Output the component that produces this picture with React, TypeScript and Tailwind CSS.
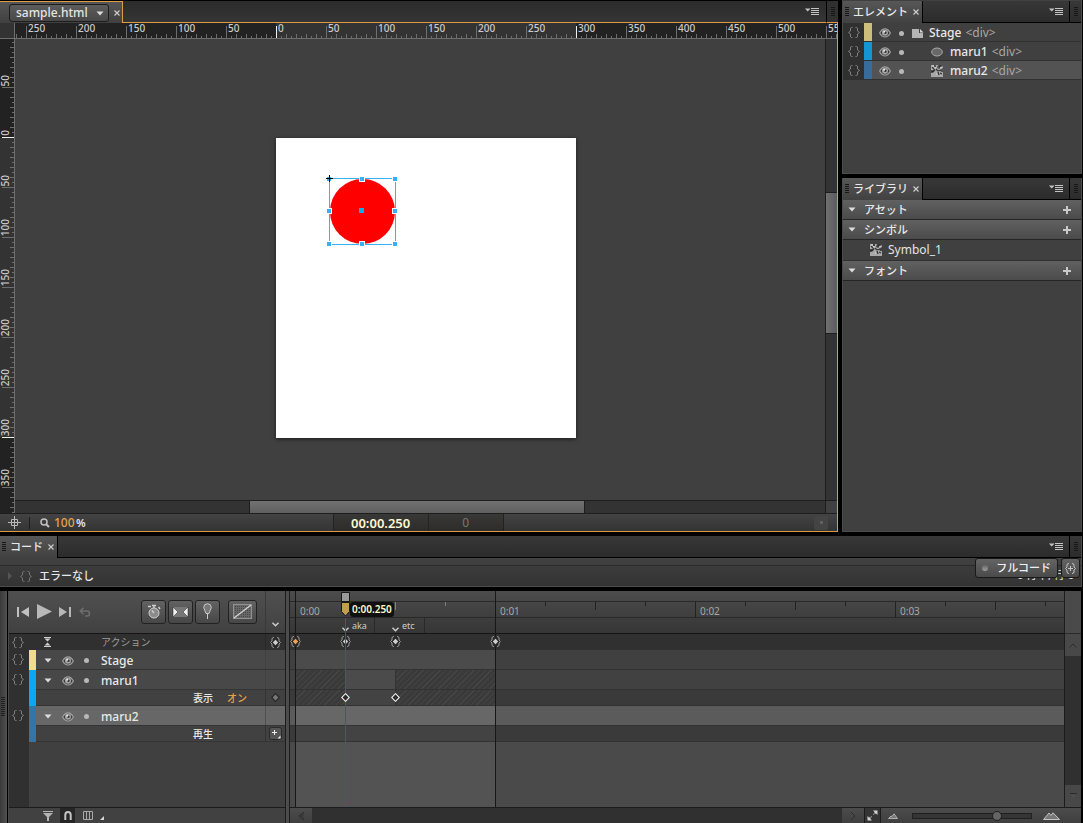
import React from 'react';
import { clsx } from 'clsx';

const rulerLabelsX = ['250', '200', '150', '100', '50', '0', '50', '100', '150', '200', '250', '300', '350', '400', '450', '500', '550'];
const rulerLabelsY = ['50', '0', '50', '100', '150', '200', '250', '300', '350', '400'];

const BraceIcon = ({ className = 'text-[#808080]' }: { className?: string }) => (
  <svg width="12" height="11" viewBox="0 0 12 11" fill="none" stroke="currentColor" className={className}>
    <path d="M4.5 .5H3.5Q2.5 .5 2.5 2V4L.5 5.5L2.5 7V9Q2.5 10.5 3.5 10.5H4.5M7.5 .5H8.5Q9.5 .5 9.5 2V4L11.5 5.5L9.5 7V9Q9.5 10.5 8.5 10.5H7.5" />
  </svg>
);

const EyeIcon = () => (
  <svg width="12" height="10" viewBox="0 0 12 10">
    <path d="M.6 5Q3 .9 6 .9T11.4 5Q9 9 6 9T.6 5Z" fill="#3a3a3a" stroke="#a0a0a0" strokeWidth="1.2" />
    <circle cx="6" cy="4.8" r="3" fill="#a8a8a8" />
    <circle cx="6.4" cy="4.8" r="1.3" fill="#333" />
    <circle cx="5.2" cy="3.8" r="1" fill="#e8e8e8" />
  </svg>
);

const Dot = () => <span className="block size-[5px] rounded-full bg-[#b8b8b8]" />;

const DownTriangle = ({ className = 'text-[#dddddd]' }: { className?: string }) => (
  <svg width="8" height="5" viewBox="0 0 8 5" className={className}>
    <path d="M.5 .5H7.5L4 4.5Z" fill="currentColor" />
  </svg>
);

const CloseIcon = () => (
  <svg width="6" height="6" viewBox="0 0 6 6" stroke="#d0d0d0" strokeWidth="1.1">
    <path d="M.5 .5L5.5 5.5M5.5 .5L.5 5.5" />
  </svg>
);

const MenuIcon = () => (
  <svg width="15" height="9" viewBox="0 0 15 9">
    <path d="M0 1.5H5.5L2.7 4.5Z" fill="#c4c4c4" />
    <path d="M6 1.5H14M6 3.5H14M6 5.5H14M6 7.5H14" stroke="#c4c4c4" strokeWidth="1" />
  </svg>
);

const Grip = () => (
  <svg width="4" height="10" viewBox="0 0 4 10" stroke="#171717">
    <path d="M0 .5H4M0 2.5H4M0 4.5H4M0 6.5H4M0 8.5H4" />
  </svg>
);

const SymbolIcon = () => (
  <svg width="12" height="12" viewBox="0 0 12 12">
    <path d="M0 0H3V2H5V0H7L6 3L8 4L12 1V3L9 5L10 7H12V12H0V8L3 7V5L0 5Z" fill="#a9a9a9" />
    <path d="M1 2L4 5M4 5L2 7H0M5 4L7 6M7 6L10 5M7 7L8 10M8 2L10 0M9 8L11 9" stroke="#333" strokeWidth="1.2" />
    <path d="M1 1H3M9 3L11 2M5 9H6M3 3L5 3" stroke="#d8d8d8" />
  </svg>
);

const PageIcon = () => (
  <svg width="12" height="9" viewBox="0 0 12 9">
    <path d="M0 0H7V4H11V9H0Z" fill="#b5b5b5" />
    <path d="M8 0L11.5 3.5H8Z" fill="#d8d8d8" />
  </svg>
);

const EllipseIcon = () => (
  <svg width="12" height="10" viewBox="0 0 12 10">
    <ellipse cx="6" cy="5" rx="5.3" ry="4" fill="#686868" stroke="#a8a8a8" />
  </svg>
);

const PlusIcon = () => (
  <svg width="8" height="8" viewBox="0 0 8 8" stroke="#c9c9c9" strokeWidth="2">
    <path d="M4 0V8M0 4H8" />
  </svg>
);

const BraceKey = ({ color = '#d0d0d0' }: { color?: string }) => (
  <svg width="11" height="11" viewBox="0 0 11 11" fill="none">
    <path d="M4 .5Q2 .5 2 2V4L.5 5.5L2 7V9Q2 10.5 4 10.5H7Q9 10.5 9 9V7L10.5 5.5L9 4V2Q9 .5 7 .5Z" fill="#2a2a2a" />
    <path d="M4 .5Q2 .5 2 2V4L.5 5.5L2 7V9Q2 10.5 4 10.5M7 .5Q9 .5 9 2V4L10.5 5.5L9 7V9Q9 10.5 7 10.5" stroke="#9a9a9a" />
    <path d="M5.5 2.8L8.2 5.5L5.5 8.2L2.8 5.5Z" fill={color} />
  </svg>
);

const Diamond = ({ filled = false }: { filled?: boolean }) => (
  <svg width="9" height="9" viewBox="0 0 9 9">
    <path d="M4.5 .7L8.3 4.5L4.5 8.3L.7 4.5Z" fill={filled ? '#777777' : '#2a2a2a'} stroke={filled ? '#242424' : '#eeeeee'} strokeWidth="1.1" />
  </svg>
);

const Chevron = () => (
  <svg width="7" height="5" viewBox="0 0 7 5" fill="none">
    <path d="M.5 .7L3.5 3.7L6.5 .7" stroke="#d0d0d0" strokeWidth="1.4" />
  </svg>
);

const PanelHeader = ({ title }: { title: string }) => (
  <div className="flex h-[22px] shrink-0 bg-gradient-to-b from-[#383838] to-[#2b2b2b]">
    <div className="flex items-center gap-1 border-r border-black bg-gradient-to-b from-[#575757] to-[#414141] pl-[2px] pr-[3px]">
      <Grip />
      <span className="mr-px text-[11px] font-medium text-[#e8e8e8]">{title}</span>
      <button type="button" aria-label={`${title}を閉じる`}><CloseIcon /></button>
    </div>
    <div className="flex flex-1 items-center justify-end border-b border-black pr-[5px]">
      <button type="button" aria-label="パネルメニュー"><MenuIcon /></button>
    </div>
    <div className="flex w-3 items-center justify-center border-b border-l border-black">
      <Grip />
    </div>
  </div>
);

const HorizontalRuler = () => (
  <div className="flex h-4 min-w-0 flex-1 overflow-hidden border-b border-[#6e6e6e] bg-[#222222]">
    <svg width="11" height="15" className="shrink-0" stroke="#6e6e6e">
      <path d="M1.5 11V15M6.5 13V15" />
    </svg>
    {rulerLabelsX.map((label, i) => (
      <div key={i} className={clsx('relative h-full w-[50px] shrink-0', i >= 5 && i < 11 && 'bg-[#333333]')}>
        <svg width="50" height="15" className="absolute inset-0" stroke="#6e6e6e">
          <path d="M.5 3V15" stroke={i === 5 || i === 11 ? '#eeeeee' : '#6e6e6e'} />
          <path d="M5.5 13V15M10.5 11V15M15.5 13V15M20.5 11V15M25.5 13V15M30.5 11V15M35.5 13V15M40.5 11V15M45.5 13V15" />
        </svg>
        <span className="relative block pl-[2px] text-[10px] leading-[11px] font-medium text-[#cccccc]">{label}</span>
      </div>
    ))}
  </div>
);

const VerticalRuler = () => (
  <div className="flex w-[15px] shrink-0 flex-col overflow-hidden border-r border-[#6e6e6e] bg-[#222222]">
    {rulerLabelsY.map((label, i) => (
      <div
        key={i}
        className={clsx(
          'relative flex w-full shrink-0 flex-col items-start justify-end pb-[2px]',
          i === 0 ? 'h-[49px]' : 'h-[50px]',
          i >= 2 && i < 8 && 'bg-[#333333]'
        )}
      >
        <svg width="14" height="50" className="absolute bottom-0 left-0" stroke="#6e6e6e">
          <path d="M2 49.5H14" stroke={i === 1 || i === 7 ? '#eeeeee' : '#6e6e6e'} />
          <path d="M12 4.5H14M10 9.5H14M12 14.5H14M10 19.5H14M12 24.5H14M10 29.5H14M12 34.5H14M10 39.5H14M12 44.5H14" />
        </svg>
        <span className="relative rotate-180 text-[10px] leading-[10px] font-medium text-[#cccccc] [writing-mode:vertical-rl]">{label}</span>
      </div>
    ))}
  </div>
);

const handles = [
  'left-[-3px] top-[-2px]', 'left-[30px] top-[-2px]', 'left-[63px] top-[-2px]',
  'left-[-3px] top-[30px]', 'left-[63px] top-[30px]',
  'left-[-3px] top-[63px]', 'left-[30px] top-[63px]', 'left-[63px] top-[63px]',
];

const Canvas = () => (
  <div className="relative min-w-0 flex-1 overflow-hidden bg-[#404040]">
    <div className="absolute left-[261px] top-[99px] size-[300px] bg-white shadow-[0_1px_4px_rgba(0,0,0,0.6)]">
      <div className="absolute left-[53px] top-[40px] size-[67px] border border-[#35b1f5]">
        <div className="size-[65px] rounded-full bg-[#ff0000]" />
        {handles.map((place) => (
          <span key={place} className={clsx('absolute size-[4px] bg-[#35b1f5] outline outline-white', place)} />
        ))}
        <span className="absolute left-[29px] top-[29px] size-[5px] bg-[#00b0f5]" />
        <svg width="7" height="7" className="absolute left-[-4px] top-[-4px]" stroke="#000">
          <path d="M3.5 0V7M0 3.5H7" />
        </svg>
      </div>
    </div>
  </div>
);

const DocumentPanel = () => (
  <section className="flex min-w-0 flex-1 flex-col border-b border-[#e09a45] bg-[#3b3b3b]">
    <div className="flex h-[22px] shrink-0">
      <div className="flex items-center gap-[5px] border-r border-t border-[#e09a45] bg-gradient-to-b from-[#555555] to-[#404040] pl-[9px] pr-[2px]">
        <div className="relative">
          <select aria-label="ドキュメント" className="block h-[18px] w-[100px] appearance-none rounded-[3px] border border-[#1d1d1d] bg-gradient-to-b from-[#5c5c5c] to-[#484848] pl-[6px] text-xs leading-4 font-medium text-[#e4e4e4]">
            <option>sample.html</option>
          </select>
          <DownTriangle className="pointer-events-none absolute right-[5px] top-[7px] text-[#dddddd]" />
        </div>
        <button type="button" aria-label="閉じる"><CloseIcon /></button>
      </div>
      <div className="flex flex-1 items-center justify-end border-b border-[#e09a45] bg-gradient-to-b from-[#2b2b2b] to-[#353535] pr-[6px]">
        <button type="button" aria-label="メニュー"><MenuIcon /></button>
      </div>
      <div className="flex w-3 items-center justify-center border-b border-l border-b-[#e09a45] border-l-black bg-[#303030]"><Grip /></div>
    </div>
    <div className="flex min-h-0 flex-1 flex-col border-r border-[#e09a45]">
      <div className="flex shrink-0">
        <div className="w-[15px] border-b border-r border-[#6e6e6e] bg-[#333333]" />
        <HorizontalRuler />
      </div>
      <div className="flex min-h-0 flex-1">
        <VerticalRuler />
        <div className="flex min-w-0 flex-1 flex-col">
          <div className="flex min-h-0 flex-1">
            <Canvas />
            <div className="w-3 border-l border-[#1e1e1e] bg-[#333333] pt-[153px]">
              <div className="h-[142px] border-y border-[#1e1e1e] bg-gradient-to-r from-[#707070] to-[#5c5c5c]" />
            </div>
          </div>
          <div className="flex h-[13px] shrink-0">
            <div className="flex-1 border-t border-[#1e1e1e] bg-[#333333] pl-[234px]">
              <div className="h-full w-[336px] border-x border-[#1e1e1e] bg-gradient-to-b from-[#727272] to-[#5f5f5f]" />
            </div>
            <div className="w-3 border-l border-t border-[#1e1e1e] bg-[#404040]" />
          </div>
        </div>
      </div>
      <div className="flex h-[18px] shrink-0 items-center border-t border-[#1e1e1e] bg-gradient-to-b from-[#434343] to-[#343434]">
        <button type="button" aria-label="中央に配置" className="ml-2">
          <svg width="13" height="13" viewBox="0 0 13 13" stroke="#b9b9b9" fill="none">
            <path d="M6.5 0V13M0 6.5H13M3.5 3.5H9.5V9.5H3.5Z" />
          </svg>
        </button>
        <span className="ml-2 h-3 w-px bg-[#1c1c1c]" />
        <svg width="10" height="10" viewBox="0 0 10 10" fill="none" stroke="#c0c0c0" className="ml-[10px]">
          <circle cx="4" cy="4" r="3" strokeWidth="1.5" />
          <path d="M6.2 6.2L9 9" strokeWidth="2" />
        </svg>
        <button type="button" className="ml-1 w-[22px] text-left text-xs leading-4 font-medium text-[#e8a04a]">100</button>
        <span className="text-[11px] leading-4 font-semibold text-[#e8e8e8]">%</span>
        <div className="ml-[247px] flex h-full border-x border-[#222222] bg-gradient-to-b from-[#383838] to-[#2d2c29]">
          <button type="button" className="w-[95px] border-r border-[#222222] text-[13px] leading-4 font-semibold text-[#fdf8cf]">00:00.250</button>
          <button type="button" className="w-[74px] text-xs leading-4 text-[#777777]">0</button>
        </div>
        <span className="mr-[9px] ml-auto flex size-[14px] items-center justify-center rounded-[2px] bg-[#444444]">
          <span className="size-[3px] bg-[#606060]" />
        </span>
      </div>
    </div>
  </section>
);

const elements = [
  { name: 'Stage', swatch: 'bg-[#cdbf7b]', icon: PageIcon, nested: false, selected: false },
  { name: 'maru1', swatch: 'bg-[#1495d4]', icon: EllipseIcon, nested: true, selected: false },
  { name: 'maru2', swatch: 'bg-[#386d9b]', icon: SymbolIcon, nested: true, selected: true },
];

const ElementsPanel = () => (
  <section className="flex h-[174px] shrink-0 flex-col border-x border-b border-[#4c4c4c] bg-[#404040] pt-px">
    <PanelHeader title="エレメント" />
    <ul>
      {elements.map((item) => (
        <li key={item.name} className={clsx('flex h-[19px] border-b border-[#303030]', item.selected ? 'bg-[#535353]' : 'bg-[#404040]')}>
          <button type="button" aria-label="アクションを開く" className="flex h-full w-[21px] items-center justify-center bg-[#303030]"><BraceIcon /></button>
          <span className={clsx('h-full w-2', item.swatch)} />
          <div className="flex items-center pl-[7px] pt-0.5">
            <button type="button" aria-label="表示"><EyeIcon /></button>
            <span className="ml-2"><Dot /></span>
            <span className={clsx('flex w-3 justify-center', item.nested ? 'ml-[27px]' : 'ml-2')}><item.icon /></span>
            <span className={clsx('text-xs leading-4 font-medium text-[#e8e8e8]', item.nested ? 'ml-[7px]' : 'ml-[5px]')}>{item.name}</span>
            <span className="ml-1 text-xs leading-4 text-[#a8a8a8]">&lt;div&gt;</span>
          </div>
        </li>
      ))}
    </ul>
  </section>
);

const LibrarySection = ({ title, children }: { title: string; children?: React.ReactNode }) => (
  <>
    <div className="flex h-5 items-center border-b border-[#252525] bg-gradient-to-b from-[#616161] to-[#4b4b4b] pl-[5px] pr-[10px]">
      <button type="button" className="flex flex-1 items-center gap-2 text-left text-[11px] leading-4 font-medium text-[#e8e8e8]">
        <DownTriangle />
        {title}
      </button>
      <button type="button" aria-label={`${title}を追加`}><PlusIcon /></button>
    </div>
    {children}
  </>
);

const LibraryPanel = () => (
  <section className="mt-1 flex min-h-0 flex-1 flex-col border-x border-b border-[#4c4c4c] bg-[#404040]">
    <PanelHeader title="ライブラリ" />
    <LibrarySection title="アセット" />
    <LibrarySection title="シンボル">
      <div className="flex h-[21px] items-center gap-[6px] border-b border-[#303030] pl-[27px] text-xs leading-4 text-[#e4e4e4]">
        <SymbolIcon />
        Symbol_1
      </div>
    </LibrarySection>
    <LibrarySection title="フォント" />
  </section>
);

const CodePanel = () => (
  <section className="relative mt-1 shrink-0 border-r border-[#4c4c4c]">
    <PanelHeader title="コード" />
    <div className="h-2 border-b border-[#2a2a2a] bg-[#404040]" />
    <div className="flex h-[21px] items-center border-b border-[#4c4c4c] bg-gradient-to-b from-[#3c3c3c] to-[#333333] pl-2 pr-[7px] text-[#e8e8e8]">
      <svg width="4" height="8"><path d="M0 0L4 4L0 8Z" fill="#555555" /></svg>
      <BraceIcon className="ml-2 text-[#757575]" />
      <span className="ml-[7px] text-[11px] leading-4 font-medium">エラーなし</span>
      <span className="ml-auto self-end text-[11px] leading-[22px]">0 行中, 行 0</span>
    </div>
    <div className="absolute right-[1px] top-[22px] flex gap-[3px]">
      <button type="button" className="flex h-5 items-center gap-2 rounded-[3px] border border-[#191919] bg-gradient-to-b from-[#646464] to-[#4a4a4a] px-[6px] text-[11px] leading-4 font-medium text-[#eeeeee]">
        <span className="size-[6px] rounded-full bg-gradient-to-b from-[#666666] to-[#a0a0a0]" />
        フルコード
      </button>
      <button type="button" aria-label="アクションを挿入" className="flex h-5 w-[19px] items-center justify-center rounded-[3px] border border-[#191919] bg-gradient-to-b from-[#646464] to-[#4a4a4a]">
        <svg width="11" height="11" viewBox="0 0 11 11" fill="none" stroke="#c4c4c4">
          <path d="M4 .5Q2 .5 2 2V4L.5 5.5L2 7V9Q2 10.5 4 10.5M7 .5Q9 .5 9 2V4L10.5 5.5L9 7V9Q9 10.5 7 10.5M5.5 3V8M3 5.5H8" />
        </svg>
      </button>
    </div>
  </section>
);

const ToolButton = ({ label, wide, children }: { label: string; wide?: boolean; children: React.ReactNode }) => (
  <button
    type="button"
    aria-label={label}
    className={clsx('flex h-6 items-center justify-center rounded-[3px] border border-[#222222] bg-gradient-to-b from-[#626262] to-[#474747]', wide ? 'ml-[6px] w-[29px]' : 'w-[25px]')}
  >
    {children}
  </button>
);

const TransportBar = () => (
  <div className="flex h-[43px] border-b border-[#151515] bg-gradient-to-b from-[#505050] to-[#414141]">
    <div className="flex flex-1 items-center justify-between border-r border-[#3a3a3a] pb-px pl-2 pr-2">
      <div className="flex items-center gap-[7px]">
        <button type="button" aria-label="先頭へ">
          <svg width="13" height="10" fill="#c0c0c0"><path d="M0 0H2V10H0ZM12 0V10L4 5Z" /></svg>
        </button>
        <button type="button" aria-label="再生">
          <svg width="15" height="15" fill="#b8b8b8"><path d="M0 0L15 7.5L0 15Z" /></svg>
        </button>
        <button type="button" aria-label="末尾へ">
          <svg width="13" height="10" fill="#b8b8b8"><path d="M10 0H12V10H10ZM0 0V10L8 5Z" /></svg>
        </button>
        <button type="button" aria-label="戻る">
          <svg width="12" height="10" fill="none" stroke="#6e6e6e" strokeWidth="1.6">
            <path d="M1.5 4H8Q10.5 4 10.5 6.5T8 9H6M4.5 .8L1.3 4L4.5 7.2" />
          </svg>
        </button>
      </div>
      <div className="flex gap-[2px]">
        <ToolButton label="自動キーフレーム">
          <svg width="14" height="17" viewBox="0 0 14 17">
            <circle cx="7" cy="10" r="5" fill="#8b8b8b" stroke="#d0d0d0" />
            <path d="M5 2.5H9M7 2V5M1 3.5H4M11.5 4L13 6M7 10L5 7.5" stroke="#d0d0d0" strokeWidth="1.4" />
          </svg>
        </ToolButton>
        <ToolButton label="自動トランジション">
          <svg width="17" height="10" viewBox="0 0 17 10">
            <rect x="1" y="0" width="15" height="10" fill="#777777" />
            <path d="M1 0L6 5L1 10ZM16 0L11 5L16 10Z" fill="#f0f0f0" stroke="#222" strokeWidth=".5" />
          </svg>
        </ToolButton>
        <ToolButton label="ピン">
          <svg width="9" height="17" viewBox="0 0 9 17">
            <path d="M4.5 10V16" stroke="#cccccc" />
            <path d="M4.5 .7Q8.3 .9 8.3 4.5L6 10.5H3L.7 4.5Q.7 .9 4.5 .7Z" fill="#777777" stroke="#c8c8c8" />
          </svg>
        </ToolButton>
        <ToolButton label="イージング" wide>
          <svg width="19" height="15" viewBox="0 0 19 15">
            <rect x=".5" y=".5" width="18" height="14" fill="#686868" stroke="#929292" />
            <path d="M2 2.5H17M2 4.5H17M2 6.5H17M2 8.5H17M2 10.5H17M2 12.5H17" stroke="#484848" strokeDasharray="1 1" />
            <path d="M1 14L18 1" stroke="#d4d4d4" strokeWidth="1.3" />
          </svg>
        </ToolButton>
      </div>
    </div>
    <div className="flex w-[19px] items-end justify-center pb-[6px]"><Chevron /></div>
  </div>
);

type Layer = {
  name: string;
  swatch: string;
  selected?: boolean;
  property?: { label: string; value?: string; key: 'diamond' | 'add' };
};

const layers: Layer[] = [
  { name: 'Stage', swatch: 'bg-[#efdd8b]' },
  { name: 'maru1', swatch: 'bg-[#0aa7f5]', property: { label: '表示', value: 'オン', key: 'diamond' } },
  { name: 'maru2', swatch: 'bg-[#3374a9]', selected: true, property: { label: '再生', key: 'add' } },
];

const LayerGroup = ({ layer }: { layer: Layer }) => (
  <div className="flex">
    <div className="flex w-5 shrink-0 bg-[#303030] pl-[3px] pt-1">
      <button type="button" aria-label="アクションを開く" className="h-[11px]"><BraceIcon /></button>
    </div>
    <div className={clsx('w-[7px] shrink-0', layer.swatch)} />
    <div className="min-w-0 flex-1">
      <div className={clsx('flex h-5 border-b border-[#343434]', layer.selected ? 'bg-[#676767]' : 'bg-[#484848]')}>
        <div className="flex flex-1 items-center border-r border-[#3a3a3a]/50 pl-2 pt-0.5">
          <button type="button" aria-label="展開"><DownTriangle /></button>
          <button type="button" aria-label="表示" className="ml-[10px]"><EyeIcon /></button>
          <span className="ml-[10px]"><Dot /></span>
          <span className="ml-3 text-xs leading-4 font-medium text-[#e8e8e8]">{layer.name}</span>
        </div>
        <div className="w-[19px]" />
      </div>
      {layer.property && (
        <div className="flex h-4 border-b border-[#343434] bg-[#414141]">
          <div className="flex flex-1 items-center border-r border-[#333333] pl-[157px] text-[10px] leading-4">
            <span className="w-[34px] font-medium text-[#e8e8e8]">{layer.property.label}</span>
            {layer.property.value && <button type="button" className="font-medium text-[#e8a04a]">{layer.property.value}</button>}
          </div>
          <button type="button" aria-label="キーフレーム" className="flex w-[19px] items-center justify-center">
            {layer.property.key === 'diamond' ? (
              <Diamond filled />
            ) : (
              <svg width="13" height="13" viewBox="0 0 13 13">
                <rect x=".5" y=".5" width="12" height="12" rx="2" fill="#555555" stroke="#292929" />
                <path d="M5.5 3V8M3 5.5H8" stroke="#eeeeee" />
                <path d="M11.5 8.5V11.5H8.5Z" fill="#eeeeee" />
              </svg>
            )}
          </button>
        </div>
      )}
    </div>
  </div>
);

const LayerPanel = () => (
  <div className="flex w-[277px] shrink-0 flex-col border-r border-[#1c1c1c] bg-[#404040]">
    <TransportBar />
    <div className="flex h-4 items-center bg-[#303030] text-[10px] leading-4 text-[#9c9c9c]">
      <span className="w-5 pl-[3px]"><BraceIcon /></span>
      <button type="button" aria-label="すべて折りたたむ" className="ml-[15px]">
        <svg width="7" height="10" viewBox="0 0 7 10" fill="#d0d0d0"><path d="M0 0H7V1H0ZM.5 1.5H6.5L3.5 4.5ZM3.5 5.5L6.5 8.5H.5ZM0 9H7V10H0Z" /></svg>
      </button>
      <span className="ml-[50px] flex-1">アクション</span>
      <span className="flex h-full w-5 items-center justify-center border-l border-[#282828]"><BraceKey /></span>
    </div>
    {layers.map((layer) => <LayerGroup key={layer.name} layer={layer} />)}
    <div className="w-5 flex-1 bg-[#303030]" />
    <div className="flex h-4 shrink-0 items-center border-t border-[#1c1c1c] bg-[#414141] pl-[34px]">
      <button type="button" aria-label="フィルター">
        <svg width="10" height="10" viewBox="0 0 10 10" fill="#b4b4b4"><path d="M0 0H10V1H0ZM0 2H10L6 6V10H4V6Z" /></svg>
      </button>
      <button type="button" aria-label="スナップ" className="ml-[7px] flex h-full w-[15px] items-center justify-center bg-[#262626]">
        <svg width="8" height="9" viewBox="0 0 8 9" fill="none" stroke="#c4c4c4" strokeWidth="2"><path d="M1.3 9V4Q1.3 1 4 1T6.7 4V9" /></svg>
      </button>
      <button type="button" aria-label="グリッド" className="ml-2 flex items-end gap-[7px]">
        <svg width="10" height="9" viewBox="0 0 10 9" fill="none" stroke="#a8a8a8"><path d="M.5 .5H9.5V8.5H.5ZM3.5 0V9M6.5 0V9" /></svg>
        <svg width="4" height="4" fill="#d8d8d8"><path d="M4 0V4H0Z" /></svg>
      </button>
    </div>
  </div>
);

const seconds = ['0:00', '0:01', '0:02', '0:03'];
const labels = [
  { name: 'aka', place: 'left-[50px]' },
  { name: 'etc', place: 'left-[100px]' },
];

const TimeRuler = () => (
  <div className="h-[43px] shrink-0 border-b border-[#151515] bg-gradient-to-b from-[#4c4c4c] to-[#363636]">
    <div className="h-[11px] border-b border-[#292929]" />
    <div className="flex h-4 overflow-hidden border-b border-[#292929] pl-[5px]">
      {seconds.map((time) => (
        <div key={time} className="relative w-[200px] shrink-0">
          <svg width="200" height="15" className="absolute inset-0" stroke="#222222">
            <path d="M.5 0V15M50.5 0V4M100.5 0V8M150.5 0V4" />
            {time === '0:00' && <path d="M100.5 0V8M150.5 0V4" stroke="#808080" />}
          </svg>
          <span className="relative block pl-[5px] text-[10px] leading-[18px] text-[#a6a6a6]">{time}</span>
        </div>
      ))}
    </div>
    <div className="relative ml-[5px] h-[15px]">
      {labels.map((label) => (
        <div key={label.name} className={clsx('absolute top-0 h-full w-[30px] border-r border-[#292929] pl-[7px] text-[9px] leading-[15px] text-[#cccccc]', label.place)}>
          {label.name}
          <span className="absolute bottom-[1px] left-[-3px]"><Chevron /></span>
        </div>
      ))}
    </div>
  </div>
);

const trackRows = [
  { height: 'h-5', base: 'bg-[#404040]', active: 'bg-[#4b4b4b]', off: false, keys: false },
  { height: 'h-5', base: 'bg-[#414141]', active: 'bg-[#4b4b4b]', off: true, keys: false },
  { height: 'h-4', base: 'bg-[#3a3a3a]', active: 'bg-[#434343]', off: true, keys: true },
  { height: 'h-5', base: 'bg-[#5b5b5b]', active: 'bg-[#676767]', off: false, keys: false },
  { height: 'h-4', base: 'bg-[#3a3a3a]', active: 'bg-[#434343]', off: false, keys: false },
];

const hatch = 'bg-[repeating-linear-gradient(135deg,#3a3a3a_0,#3a3a3a_3px,#454545_3px,#454545_4px)]';
const actionKeys = ['left-0', 'left-[50px]', 'left-[100px]', 'left-[200px]'];

const Tracks = () => (
  <div className="relative flex min-h-0 min-w-0 flex-1 flex-col overflow-hidden bg-[#4a4a4a]">
    <TimeRuler />
    <div className="h-4 shrink-0 bg-[#303030]" />
    {trackRows.map((row, i) => (
      <div key={i} className={clsx('relative shrink-0 border-b border-[#323232] pl-[5px]', row.height, row.base)}>
        <div className={clsx('flex h-full w-[200px]', row.active)}>
          {row.off && (
            <>
              <span className={clsx('w-[50px]', hatch)} />
              <span className={clsx('ml-[50px] w-[100px] border-l border-[#333333]', hatch)} />
            </>
          )}
        </div>
        {row.keys && (
          <>
            <button type="button" aria-label="表示 0:00.250" className="absolute left-[51px] top-[3px] z-20"><Diamond /></button>
            <button type="button" aria-label="表示 0:00.500" className="absolute left-[101px] top-[3px] z-20"><Diamond /></button>
          </>
        )}
      </div>
    ))}
    <div className="flex-1 pl-[5px]"><div className="h-full w-[200px] bg-[#535353]" /></div>

    <div className="pointer-events-none absolute inset-y-0 left-[5px] w-[201px] border-x border-[#171717]" />
    <div className="absolute left-0 top-[45px] z-10">
      {actionKeys.map((place, i) => (
        <button key={place} type="button" aria-label="アクション" className={clsx('absolute top-0', place)}>
          <BraceKey color={i === 0 ? '#f7a14a' : '#d0d0d0'} />
        </button>
      ))}
    </div>
    <div className="absolute bottom-0 left-[55px] top-[27px] z-10 w-px bg-[#e81420]" />
    <svg width="9" height="25" viewBox="0 0 9 25" className="absolute left-[51px] top-px z-20">
      <path d="M.5 .5H8.5V9.5H.5Z" fill="#999999" stroke="#171717" />
      <path d="M.5 10.5H8.5V19.5L4.5 24L.5 19.5Z" fill="#c0a04c" stroke="#171717" />
    </svg>
    <div className="absolute left-[60px] top-[11px] z-20 rounded-[3px] bg-[#101010] px-[2px] text-[10px] leading-[15px] font-semibold text-[#fdf8cf]">0:00.250</div>
  </div>
);

const TimelinePanel = () => (
  <section className="mt-1 flex h-[232px] shrink-0 bg-[#4a4a4a]">
    <div className="flex w-2 items-center border-r border-black bg-gradient-to-r from-[#3a3a3a] to-[#505050]">
      <svg width="4" height="20" stroke="#202020" className="ml-px"><path d="M0 .5H4M0 2.5H4M0 4.5H4M0 6.5H4M0 8.5H4M0 10.5H4M0 12.5H4M0 14.5H4M0 16.5H4M0 18.5H4" /></svg>
    </div>
    <div className="ml-px flex min-w-0 flex-1">
      <LayerPanel />
      <div className="w-1 shrink-0 border-r border-[#1c1c1c] bg-[#4c4c4c]" />
      <div className="flex min-w-0 flex-1 flex-col">
        <div className="flex min-h-0 flex-1">
          <Tracks />
          <div className="flex w-[17px] shrink-0 flex-col border-l border-[#1c1c1c] bg-[#303030]">
            <div className="h-[43px] border-b border-[#292929] bg-[#4a4a4a]" />
            <button type="button" aria-label="上へスクロール" className="flex h-[22px] items-center justify-center bg-[#484848]">
              <svg width="8" height="5" fill="none" stroke="#2c2c2c"><path d="M.5 4.5L4 1L7.5 4.5" /></svg>
            </button>
            <div className="flex-1" />
            <button type="button" aria-label="下へスクロール" className="flex h-[22px] items-center justify-center bg-[#484848]">
              <svg width="8" height="6"><path d="M1 .5H8" stroke="#2c2c2c" /><path d="M2 2H7L4.5 5Z" fill="#505050" /></svg>
            </button>
          </div>
        </div>
        <div className="flex h-4 shrink-0 items-center border-t border-[#1c1c1c] bg-gradient-to-b from-[#4c4c4c] to-[#3f3f3f]">
          <button type="button" aria-label="左へスクロール" className="flex h-full w-[22px] items-center justify-center">
            <svg width="5" height="8"><path d="M5 0L0 4L5 8" fill="#3c3c3c" stroke="#2c2c2c" /></svg>
          </button>
          <div className="h-full flex-1 bg-[#303030]" />
          <button type="button" aria-label="右へスクロール" className="flex h-full w-[22px] items-center justify-center">
            <svg width="5" height="8" fill="none" stroke="#2c2c2c"><path d="M0 0L4 4L0 8" /></svg>
          </button>
          <button type="button" aria-label="全体を表示" className="flex h-full w-[17px] items-center justify-center border-x border-[#1c1c1c] bg-[#353535]">
            <svg width="11" height="11" viewBox="0 0 11 11" fill="#d4d4d4" stroke="#d4d4d4">
              <path d="M6 .5H10.5V5ZM.5 6V10.5H5Z" stroke="none" />
              <path d="M9 2L6.5 4.5M2 9L4.5 6.5" strokeWidth="1.5" strokeDasharray="2 1" />
            </svg>
          </button>
          <svg width="10" height="6" viewBox="0 0 10 6" className="ml-[7px]" fill="#787878" stroke="#c4c4c4" strokeWidth=".8"><path d="M.5 5.5L3 3L4 3.5L6 .8L9.5 5.5Z" /></svg>
          <input
            type="range"
            aria-label="ズーム"
            defaultValue={73}
            className="mr-[11px] ml-[14px] h-[6px] w-[120px] appearance-none border border-[#202020] bg-[#353535] [&::-webkit-slider-thumb]:size-[10px] [&::-webkit-slider-thumb]:appearance-none [&::-webkit-slider-thumb]:rounded-full [&::-webkit-slider-thumb]:border [&::-webkit-slider-thumb]:border-[#202020] [&::-webkit-slider-thumb]:bg-[#646464]"
          />
          <svg width="17" height="8" viewBox="0 0 17 8" className="mr-[21px]" fill="#787878" stroke="#c4c4c4"><path d="M.5 7.5L6 1L8 3.5L10 .8L16.5 7.5Z" /></svg>
        </div>
      </div>
    </div>
    <div className="w-px bg-black" />
  </section>
);

const App = () => (
  <div className="flex h-screen flex-col overflow-hidden bg-black pr-px font-['Noto_Sans','Noto_Sans_CJK_JP',sans-serif]">
    <main className="flex min-h-0 flex-1 gap-1">
      <div className="flex min-w-0 flex-1 pt-px"><DocumentPanel /></div>
      <aside className="flex w-[240px] shrink-0 flex-col">
        <ElementsPanel />
        <LibraryPanel />
      </aside>
    </main>
    <CodePanel />
    <TimelinePanel />
  </div>
);

export default App;
